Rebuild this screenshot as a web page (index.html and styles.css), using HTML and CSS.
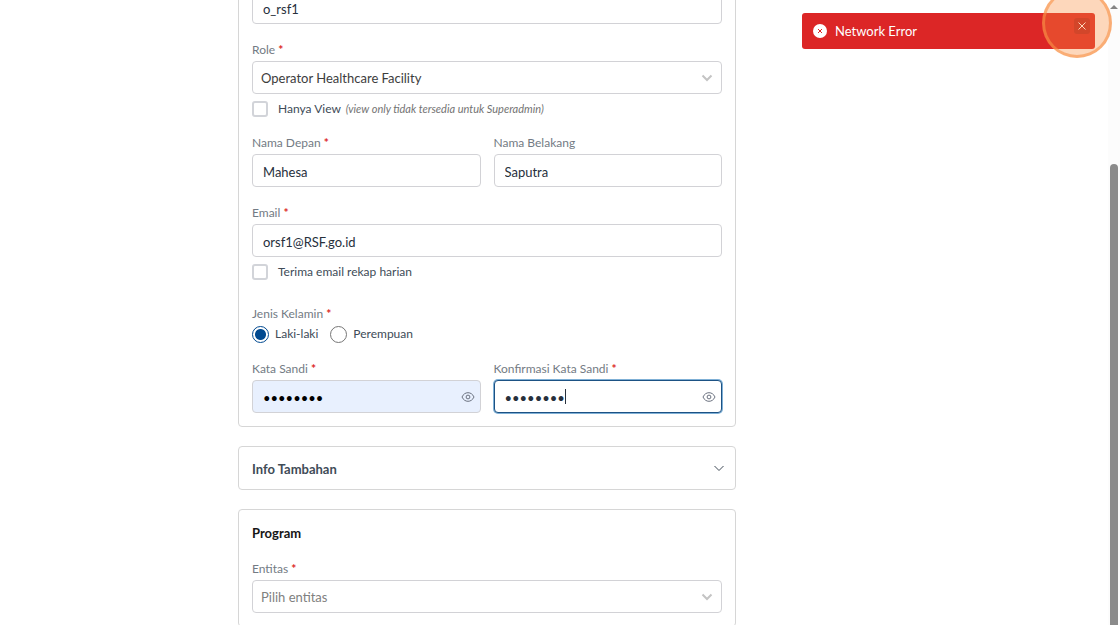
FILE: index.html
```html
<!DOCTYPE html>
<html lang="id">
<head>
    <meta charset="UTF-8">
    <title>User</title>
    <link rel="stylesheet" href="styles.css">
</head>
<body>
<main class="page">
    <form class="form">
        <section class="card card-user">
            <input class="input" id="username" type="text" value="o_rsf1" aria-label="Username">
            <div class="field">
                <label for="role">Role <span class="req">*</span></label>
                <div class="control">
                    <select class="input select" id="role">
                        <option>Operator Healthcare Facility</option>
                    </select>
                    <svg class="chevron" viewBox="0 0 12 12"><path d="M1.500 3.500 6 8l4.500-4.500"/></svg>
                </div>
                <div class="check">
                    <input type="checkbox" id="view">
                    <label for="view">Hanya View <em>(view only tidak tersedia untuk Superadmin)</em></label>
                </div>
            </div>
            <div class="row">
                <div class="field">
                    <label for="first">Nama Depan <span class="req">*</span></label>
                    <input class="input" id="first" type="text" value="Mahesa">
                </div>
                <div class="field">
                    <label for="last">Nama Belakang</label>
                    <input class="input" id="last" type="text" value="Saputra">
                </div>
            </div>
            <div class="field">
                <label for="email">Email <span class="req">*</span></label>
                <input class="input" id="email" type="email" value="orsf1@RSF.go.id">
                <div class="check">
                    <input type="checkbox" id="recap">
                    <label for="recap">Terima email rekap harian</label>
                </div>
            </div>
            <fieldset class="gender">
                <legend>Jenis Kelamin <span class="req">*</span></legend>
                <div class="radios">
                    <input type="radio" name="gender" id="male" checked>
                    <label for="male">Laki-laki</label>
                    <input type="radio" name="gender" id="female">
                    <label for="female">Perempuan</label>
                </div>
            </fieldset>
            <div class="row">
                <div class="field">
                    <label for="password">Kata Sandi <span class="req">*</span></label>
                    <div class="control">
                        <input class="input password filled" id="password" type="password" value="password">
                        <button class="eye" type="button" aria-label="Lihat kata sandi">
                            <svg viewBox="0 0 14 14"><path d="M1 7c1.300-2.800 3.400-4.300 6-4.300s4.700 1.500 6 4.300c-1.300 2.800-3.400 4.300-6 4.300S2.300 9.800 1 7z"/><circle cx="7" cy="7" r="1.900"/></svg>
                        </button>
                    </div>
                </div>
                <div class="field">
                    <label for="confirm">Konfirmasi Kata Sandi <span class="req">*</span></label>
                    <div class="control">
                        <input class="input password active" id="confirm" type="password" value="password">
                        <span class="caret"></span>
                        <button class="eye" type="button" aria-label="Lihat kata sandi">
                            <svg viewBox="0 0 14 14"><path d="M1 7c1.300-2.800 3.400-4.300 6-4.300s4.700 1.500 6 4.300c-1.300 2.800-3.400 4.300-6 4.300S2.300 9.800 1 7z"/><circle cx="7" cy="7" r="1.900"/></svg>
                        </button>
                    </div>
                </div>
            </div>
        </section>
        <section class="card card-info">
            <button class="accordion" type="button">
                <span>Info Tambahan</span>
                <svg viewBox="0 0 12 12"><path d="M1.500 3 6 7.500 10.500 3"/></svg>
            </button>
        </section>
        <section class="card">
            <h2>Program</h2>
            <div class="field">
                <label for="entity">Entitas <span class="req">*</span></label>
                <div class="control">
                    <select class="input select empty" id="entity">
                        <option>Pilih entitas</option>
                    </select>
                    <svg class="chevron" viewBox="0 0 12 12"><path d="M1.500 3.500 6 8l4.500-4.500"/></svg>
                </div>
            </div>
        </section>
    </form>
</main>
<div class="toast" role="alert">
    <svg class="toast-icon" viewBox="0 0 16 16"><circle cx="8" cy="8" r="7"/><path d="m6 6 4 4m0-4-4 4"/></svg>
    <span>Network Error</span>
    <button class="close" type="button" aria-label="Tutup">
        <svg viewBox="0 0 16 16"><path d="m4.500 4.500 7 7m0-7-7 7"/></svg>
    </button>
</div>
<div class="scrollbar">
    <div class="arrow"></div>
    <div class="thumb"></div>
</div>
<div class="click"></div>
</body>
</html>
```
FILE: styles.css
```css
* {
    box-sizing: border-box;
    margin: 0;
    padding: 0;
}
body {
    height: 100vh;
    overflow: hidden;
    background: #fff;
    color: #404b57;
    font: 12px/18px Lato, "Liberation Sans", sans-serif;
}
input, select, button {
    font: inherit;
    color: inherit;
}
svg {
    fill: none;
    stroke: currentColor;
    display: block;
}
.page {
    display: grid;
    grid-template-columns: 238fr 498fr 384fr;
}
.form {
    grid-column: 2;
    display: flex;
    flex-direction: column;
    gap: 19px;
    min-width: 0;
}
.card {
    border: 1px solid #d6d6d6;
    border-radius: 4px;
    padding: 13px;
}
/* scrolled past the top of the card */
.card-user {
    display: flex;
    flex-direction: column;
    gap: 16px;
    margin-top: -23px;
}
.field > label, legend {
    display: block;
    margin-bottom: 1px;
    color: #737b84;
    line-height: 20px;
}
.req {
    color: #dc2626;
    font-weight: 700;
}
.row {
    display: grid;
    grid-template-columns: 1fr 1fr;
    gap: 13px;
}
.control {
    position: relative;
}
.input {
    display: block;
    width: 100%;
    height: 33px;
    padding: 2px 10px 0;
    border: 1px solid #d2d2d6;
    border-radius: 4px;
    background: #fff;
    color: #27303c;
    font-size: 13px;
    outline: none;
}
.select {
    appearance: none;
    padding: 0 8px;
    color: #3d3d3d;
}
.select.empty {
    color: #808080;
}
.chevron {
    position: absolute;
    right: 9px;
    top: 11px;
    width: 12px;
    height: 12px;
    color: #c4c4c4;
    stroke-width: 2;
    pointer-events: none;
}
.password {
    padding-right: 32px;
}
.filled {
    background: #e8f0fe;
    color: #000;
}
.active {
    border-color: #1d5284;
    box-shadow: 0 0 0 1px #7fb0d6;
}
.caret {
    position: absolute;
    left: 71px;
    top: 9px;
    width: 1px;
    height: 15px;
    background: #27303c;
}
.eye {
    position: absolute;
    right: 6px;
    top: 10px;
    border: 0;
    background: none;
    color: #6b7280;
}
.eye svg {
    width: 14px;
    height: 14px;
}
.check {
    display: flex;
    align-items: center;
    gap: 10px;
    height: 17px;
    margin-top: 6px;
}
.check input {
    appearance: none;
    width: 16px;
    height: 16px;
    border: 2px solid #d2d4d9;
    border-radius: 3px;
}
.check em {
    margin-left: 2px;
    color: #737373;
    font-size: 11px;
}
.gender {
    border: 0;
    margin-top: 8px;
}
.radios {
    display: flex;
    align-items: center;
    height: 18px;
}
.radios input {
    appearance: none;
    width: 17px;
    height: 17px;
    border: 1px solid #767676;
    border-radius: 50%;
    margin-right: 6px;
}
.radios input:checked {
    border-color: #004990;
    background: radial-gradient(circle, #004990 5px, #fff 6px);
}
.radios label {
    margin-right: 12px;
}
.card-info {
    padding: 14px 10px 12px 13px;
}
.accordion {
    display: flex;
    justify-content: space-between;
    align-items: center;
    width: 100%;
    height: 16px;
    border: 0;
    background: none;
    font-size: 13px;
    font-weight: 700;
}
.accordion svg {
    width: 12px;
    height: 12px;
}
h2 {
    margin-bottom: 16px;
    color: #161616;
    font-size: 13px;
    line-height: 20px;
}
.toast {
    position: fixed;
    top: 13px;
    right: 25px;
    display: flex;
    align-items: center;
    gap: 7px;
    width: 293px;
    height: 36px;
    padding: 0 5px 0 10px;
    border-radius: 3px;
    background: #dc2626;
    color: #fff;
    font-size: 13px;
}
.toast-icon {
    width: 16px;
    height: 16px;
    fill: #fff;
    stroke: none;
}
.toast-icon path {
    stroke: #dc2626;
}
.close {
    align-self: flex-start;
    margin: 5px 0 0 auto;
    border: 0;
    border-radius: 3px;
    background: #bd2121;
}
.close svg {
    width: 16px;
    height: 16px;
}
.click {
    position: fixed;
    top: -12px;
    right: 8px;
    width: 70px;
    height: 70px;
    border: 3px solid rgba(247, 145, 70, .6);
    border-radius: 50%;
    background: rgba(249, 140, 60, .35);
}
.scrollbar {
    position: fixed;
    top: 0;
    right: 0;
    bottom: 0;
    width: 12px;
    background: #fcfcfc;
}
.arrow {
    margin: 5px auto 0 2px;
    width: 8px;
    border: 4px solid transparent;
    border-top: 0;
    border-bottom-color: #858585;
}
.thumb {
    position: absolute;
    top: 164px;
    bottom: 0;
    left: 2px;
    width: 8px;
    border-radius: 4px 4px 0 0;
    background: #8b8b8b;
}
```
